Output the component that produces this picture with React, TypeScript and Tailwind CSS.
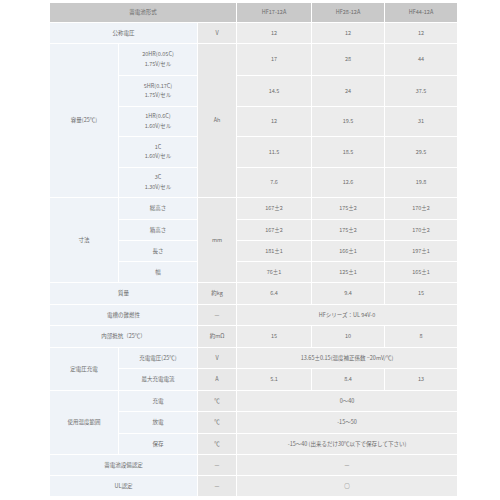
import React from 'react';

const L = 'bg-[#eff3f8]';
const U = 'bg-[#e8e8e8]';
const V = 'bg-[#ececec]';

const Cell: React.FC<{ className?: string; colSpan?: number; rowSpan?: number; children?: React.ReactNode }> = ({ className = '', colSpan, rowSpan, children }) => (
  <td colSpan={colSpan} rowSpan={rowSpan} className={`border border-white text-center align-middle p-0 ${className}`}>
    {children}
  </td>
);

const Two: React.FC<{ a: string; b: string }> = ({ a, b }) => (
  <div className="leading-[9.5px]">
    <div>{a}</div>
    <div>{b}</div>
  </div>
);

const App: React.FC = () => {
  const capacity = [
    { a: '20HR(0.05C)', b: '1.75V/セル', v: ['17', '28', '44'], h: 'h-[32px]' },
    { a: '5HR(0.17C)', b: '1.75V/セル', v: ['14.5', '24', '37.5'], h: 'h-[31px]' },
    { a: '1HR(0.6C)', b: '1.60V/セル', v: ['12', '19.5', '31'], h: 'h-[30px]' },
    { a: '1C', b: '1.60V/セル', v: ['11.5', '18.5', '29.5'], h: 'h-[31px]' },
    { a: '3C', b: '1.30V/セル', v: ['7.6', '12.6', '19.8'], h: 'h-[30px]' },
  ];
  const size = [
    { a: '総高さ', v: ['167±2', '175±2', '170±2'], h: 'h-[22px]' },
    { a: '箱高さ', v: ['167±2', '175±2', '170±2'], h: 'h-[21px]' },
    { a: '長さ', v: ['181±1', '166±1', '197±1'], h: 'h-[21px]' },
    { a: '幅', v: ['76±1', '125±1', '165±1'], h: 'h-[21px]' },
  ];

  return (
    <div className="w-[500px] h-[500px] bg-white pt-[2px] pl-[49px]" style={{ fontFamily: '"Noto Sans CJK JP", "Noto Sans", sans-serif' }}>
      <table className="table-fixed border-collapse w-[408px] text-[5.5px] text-[#6b6b6b]">
        <colgroup>
          <col className="w-[69px]" />
          <col className="w-[79px]" />
          <col className="w-[39px]" />
          <col className="w-[75px]" />
          <col className="w-[73px]" />
          <col className="w-[73px]" />
        </colgroup>
        <tbody>
          <tr className="h-[20px]">
            <Cell colSpan={3} className="bg-[#c9c9c9]">蓄電池形式</Cell>
            <Cell className="bg-[#c9c9c9]">HF17-12A</Cell>
            <Cell className="bg-[#c9c9c9]">HF28-12A</Cell>
            <Cell className="bg-[#c9c9c9]">HF44-12A</Cell>
          </tr>
          <tr className="h-[21px]">
            <Cell colSpan={2} className={L}>公称電圧</Cell>
            <Cell className={U}>V</Cell>
            <Cell className={V}>12</Cell>
            <Cell className={V}>12</Cell>
            <Cell className={V}>12</Cell>
          </tr>
          {capacity.map((r, i) => (
            <tr key={r.a} className={r.h}>
              {i === 0 && <Cell rowSpan={5} className={L}>容量(25℃)</Cell>}
              <Cell className={L}><Two a={r.a} b={r.b} /></Cell>
              {i === 0 && <Cell rowSpan={5} className={U}>Ah</Cell>}
              {r.v.map((v, j) => <Cell key={j} className={V}>{v}</Cell>)}
            </tr>
          ))}
          {size.map((r, i) => (
            <tr key={r.a} className={r.h}>
              {i === 0 && <Cell rowSpan={4} className={L}>寸法</Cell>}
              <Cell className={L}>{r.a}</Cell>
              {i === 0 && <Cell rowSpan={4} className={U}>mm</Cell>}
              {r.v.map((v, j) => <Cell key={j} className={V}>{v}</Cell>)}
            </tr>
          ))}
          <tr className="h-[22px]">
            <Cell colSpan={2} className={L}>質量</Cell>
            <Cell className={U}>約kg</Cell>
            <Cell className={V}>6.4</Cell>
            <Cell className={V}>9.4</Cell>
            <Cell className={V}>15</Cell>
          </tr>
          <tr className="h-[21px]">
            <Cell colSpan={2} className={L}>電槽の難燃性</Cell>
            <Cell className={U}>—</Cell>
            <Cell colSpan={3} className={V}>HFシリーズ：UL 94V-0</Cell>
          </tr>
          <tr className="h-[22px]">
            <Cell colSpan={2} className={L}>内部抵抗（25℃）</Cell>
            <Cell className={U}>約mΩ</Cell>
            <Cell className={V}>15</Cell>
            <Cell className={V}>10</Cell>
            <Cell className={V}>8</Cell>
          </tr>
          <tr className="h-[21px]">
            <Cell rowSpan={2} className={L}>定電圧充電</Cell>
            <Cell className={L}>充電電圧(25℃)</Cell>
            <Cell className={U}>V</Cell>
            <Cell colSpan={3} className={V}>13.65±0.15(温度補正係数 −20mV/℃)</Cell>
          </tr>
          <tr className="h-[22px]">
            <Cell className={L}>最大充電電流</Cell>
            <Cell className={U}>A</Cell>
            <Cell className={V}>5.1</Cell>
            <Cell className={V}>8.4</Cell>
            <Cell className={V}>13</Cell>
          </tr>
          <tr className="h-[21px]">
            <Cell rowSpan={3} className={L}>使用温度範囲</Cell>
            <Cell className={L}>充電</Cell>
            <Cell className={U}>℃</Cell>
            <Cell colSpan={3} className={V}>0〜40</Cell>
          </tr>
          <tr className="h-[22px]">
            <Cell className={L}>放電</Cell>
            <Cell className={U}>℃</Cell>
            <Cell colSpan={3} className={V}>-15〜50</Cell>
          </tr>
          <tr className="h-[21px]">
            <Cell className={L}>保存</Cell>
            <Cell className={U}>℃</Cell>
            <Cell colSpan={3} className={V}>-15〜40 (出来るだけ30℃以下で保存して下さい)</Cell>
          </tr>
          <tr className="h-[21px]">
            <Cell colSpan={2} className={L}>蓄電池設備認定</Cell>
            <Cell className={U}>—</Cell>
            <Cell colSpan={3} className={V}>—</Cell>
          </tr>
          <tr className="h-[21px]">
            <Cell colSpan={2} className={L}>UL認定</Cell>
            <Cell className={U}>—</Cell>
            <Cell colSpan={3} className={V}>○</Cell>
          </tr>
        </tbody>
      </table>
    </div>
  );
};

export default App;
